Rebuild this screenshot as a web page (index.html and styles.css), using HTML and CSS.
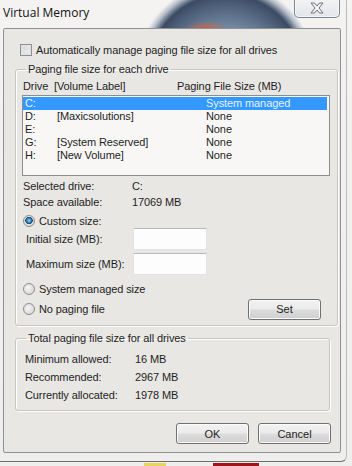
FILE: index.html
```html
<!DOCTYPE html>
<html>
<head>
    <title>Virtual Memory</title>
    <link rel="stylesheet" href="styles.css">
</head>
<body>
    <div class="window">
        <div class="titlebar">
            <span class="title">Virtual Memory</span>
            <span class="close">
                <svg width="16" height="12" viewBox="0 0 16 12">
                    <path d="M2 1 L5.5 1 L8 4 L10.5 1 L14 1 L10 6 L14 11 L10.5 11 L8 8 L5.5 11 L2 11 L6 6 Z" fill="#f4f5f7" stroke="#6b717c" stroke-width="1" stroke-linejoin="round"/>
                </svg>
            </span>
        </div>

        <div class="panel">
            <div class="check-row">
                <span class="checkbox"></span>
                <span>Automatically manage paging file size for all drives</span>
            </div>

            <fieldset class="group drives">
                <legend>Paging file size for each drive</legend>
                <div class="list-head">
                    <span class="h-drive">Drive</span>
                    <span class="h-label">[Volume Label]</span>
                    <span class="h-size">Paging File Size (MB)</span>
                </div>
                <div class="list">
                    <div class="row selected"><span>C:</span><span></span><span>System managed</span></div>
                    <div class="row"><span>D:</span><span>[Maxicsolutions]</span><span>None</span></div>
                    <div class="row"><span>E:</span><span></span><span>None</span></div>
                    <div class="row"><span>G:</span><span>[System Reserved]</span><span>None</span></div>
                    <div class="row"><span>H:</span><span>[New Volume]</span><span>None</span></div>
                </div>

                <div class="info">
                    <span>Selected drive:</span><span>C:</span>
                    <span>Space available:</span><span>17069 MB</span>
                </div>

                <div class="radio-row custom">
                    <span class="radio checked"></span>
                    <span>Custom size:</span>
                </div>
                <div class="size-row first">
                    <span class="size-label">Initial size (MB):</span>
                    <span class="textbox"></span>
                </div>
                <div class="size-row">
                    <span class="size-label">Maximum size (MB):</span>
                    <span class="textbox"></span>
                </div>
                <div class="radio-row managed">
                    <span class="radio"></span>
                    <span>System managed size</span>
                </div>
                <div class="radio-row nopage">
                    <span class="radio"></span>
                    <span>No paging file</span>
                    <button class="btn set">Set</button>
                </div>
            </fieldset>

            <fieldset class="group total">
                <legend>Total paging file size for all drives</legend>
                <div class="totals">
                    <span>Minimum allowed:</span><span>16 MB</span>
                    <span>Recommended:</span><span>2967 MB</span>
                    <span>Currently allocated:</span><span>1978 MB</span>
                </div>
            </fieldset>

            <div class="buttons">
                <button class="btn">OK</button>
                <button class="btn">Cancel</button>
            </div>
        </div>
        <div class="below">
            <span class="blob yellow"></span>
            <span class="blob red"></span>
        </div>
    </div>
</body>
</html>
```

FILE: styles.css
```css
* {
    margin: 0;
    padding: 0;
    box-sizing: border-box;
}
body {
    width: 352px;
    height: 466px;
    overflow: hidden;
    font-family: 'Liberation Sans', Arial, sans-serif;
    font-size: 11px;
    letter-spacing: -0.1px;
    color: #1e1e1e;
    background:
        radial-gradient(ellipse 22px 8px at 206px 29px, rgba(214, 96, 60, 0.9), rgba(214, 96, 60, 0) 100%),
        radial-gradient(circle 90px at 226px 72px, #8ea0b3 0%, #7288a0 50%, #4f617a 74%, #3a4b63 86%, rgba(120, 135, 160, 0.5) 94%, rgba(200, 210, 220, 0) 100%),
        linear-gradient(180deg, #f4f3f2 0%, #eeeeed 100%);
}
.window {
    width: 347px;
    height: 462px;
    border-right: 1px solid #b9bcc0;
    border-bottom: 1px solid #6e6e6e;
    border-radius: 0 0 6px 0;
    position: relative;
}

/* title bar */
.titlebar {
    height: 28px;
    display: flex;
    justify-content: space-between;
    align-items: flex-start;
}
.title {
    font-family: 'Open Sans', sans-serif;
    font-size: 12px;
    letter-spacing: 0;
    color: #111;
    padding: 4px 0 0 3px;
}
.close {
    width: 46px;
    height: 19px;
    margin: -1px 6px 0 0;
    border: 1px solid #7f8590;
    border-top: none;
    border-radius: 0 0 5px 5px;
    background: linear-gradient(180deg, rgba(240, 242, 245, 0.55), rgba(220, 226, 232, 0.75));
    box-shadow: inset 0 0 0 1px rgba(255, 255, 255, 0.6);
    display: flex;
    justify-content: center;
    align-items: center;
}

/* main panel */
.panel {
    margin-left: 3px;
    width: 338px;
    height: 425px;
    background: #e9e7e4;
    border: 1px solid #8f9194;
    border-radius: 2px;
    padding: 14px 0 0 11px;
}
.check-row {
    display: flex;
    align-items: center;
    height: 14px;
    margin-left: 5px;
    gap: 4px;
}
.checkbox {
    width: 12px;
    height: 12px;
    border: 1px solid #8e8f8f;
    background: linear-gradient(135deg, #cfd2d6, #f4f4f4);
    box-shadow: inset 0 0 0 2px #e2e3e5;
}

/* group boxes */
.group {
    width: 315px;
    border: 1px solid #c9c6c1;
    border-radius: 3px;
    box-shadow: 1px 1px 0 #ffffff, inset 1px 1px 0 #ffffff;
    padding: 0 7px 6px 7px;
}
.group legend {
    padding: 0 2px;
    margin-left: 3px;
    line-height: 13px;
    color: #222;
}
.drives {
    margin-top: 6px;
}
.total {
    margin-top: 6px;
}

.list-head {
    display: flex;
    height: 13px;
    line-height: 13px;
    margin-top: 4px;
}
.h-drive {
    width: 31px;
}
.h-label {
    width: 123px;
}
.list {
    margin: 2px 0 0 -1px;
    width: 308px;
    height: 81px;
    border: 1px solid #8c8d8f;
    background: #f8f7f6;
    padding-top: 1px;
}
.row {
    display: grid;
    grid-template-columns: 32px 149px 1fr;
    height: 13px;
    line-height: 13px;
    padding-left: 2px;
    margin-right: 2px;
}
.row.selected {
    background: #3399ff;
    color: #e6f2ff;
}

.info,
.totals {
    display: grid;
    grid-template-columns: 109px 1fr;
}
.info {
    margin-top: 2px;
    line-height: 16px;
}
.totals {
    grid-template-columns: 110px 1fr;
    margin: 5px 0 0 2px;
    line-height: 18px;
}

/* radio buttons */
.radio-row {
    display: flex;
    align-items: center;
    gap: 4px;
    height: 14px;
}
.radio {
    width: 12px;
    height: 12px;
    border-radius: 50%;
    border: 1px solid #8d8d8d;
    background: radial-gradient(circle at 40% 40%, #f5f5f5, #cfcfcf);
}
.radio.checked {
    background:
        radial-gradient(circle at 50% 45%, #9fd3f2 0, #3f88c0 2px, #12456e 3.5px, rgba(0, 0, 0, 0) 4px),
        radial-gradient(circle at 40% 40%, #f5f5f5, #d0d0d0);
}
.custom {
    margin-top: 4px;
}
.managed {
    margin-top: 7px;
}
.nopage {
    height: 20px;
    margin-top: 3px;
}

.size-row {
    display: flex;
    align-items: center;
    margin-left: 3px;
    margin-top: 3px;
}
.size-row.first {
    margin-top: 0;
}
.size-label {
    width: 107px;
}
.textbox {
    width: 74px;
    height: 22px;
    background: #fdfdfd;
    border: 1px solid #e2e3e6;
    border-top-color: #b7b9bd;
}

/* buttons */
.btn {
    width: 73px;
    height: 21px;
    font-family: 'Liberation Sans', Arial, sans-serif;
    font-size: 11px;
    color: #1e1e1e;
    border: 1px solid #707070;
    border-radius: 3px;
    background: linear-gradient(180deg, #f2f2f2 0%, #ebebeb 49%, #dddddd 51%, #cfcfcf 100%);
    box-shadow: inset 0 0 0 1px #fcfcfc;
}
.set {
    margin-left: auto;
    margin-right: 9px;
}
.buttons {
    display: flex;
    justify-content: flex-end;
    gap: 9px;
    margin: 12px 9px 0 0;
}

/* blurred desktop below the dialog */
.below {
    position: absolute;
    left: 0;
    top: 463px;
    width: 352px;
    height: 4px;
}
.blob {
    position: absolute;
    top: 0;
    height: 4px;
}
.yellow {
    left: 144px;
    width: 22px;
    background: #e8d65a;
}
.red {
    left: 213px;
    width: 46px;
    background: #a0141a;
}
```
